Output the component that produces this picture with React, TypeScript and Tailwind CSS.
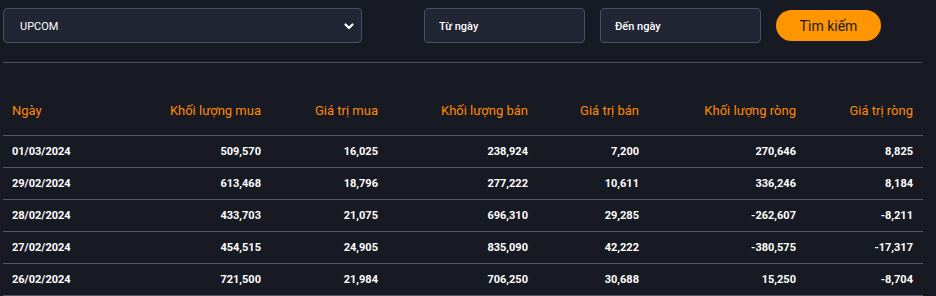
const rows = [
  ['01/03/2024', '509,570', '16,025', '238,924', '7,200', '270,646', '8,825'],
  ['29/02/2024', '613,468', '18,796', '277,222', '10,611', '336,246', '8,184'],
  ['28/02/2024', '433,703', '21,075', '696,310', '29,285', '-262,607', '-8,211'],
  ['27/02/2024', '454,515', '24,905', '835,090', '42,222', '-380,575', '-17,317'],
  ['26/02/2024', '721,500', '21,984', '706,250', '30,688', '15,250', '-8,704'],
]

const headers = ['Ngày', 'Khối lượng mua', 'Giá trị mua', 'Khối lượng bán', 'Giá trị bán', 'Khối lượng ròng', 'Giá trị ròng']

const grid = 'grid grid-cols-[145px_123px_117px_150px_111px_157px_117px]'

export default function App() {
  return (
    <div className="h-[296px] w-[936px] overflow-hidden bg-[#181a23] font-['Roboto',sans-serif]">
      {/* Filter bar */}
      <div className="flex items-center pl-[3px] pt-[8px]">
        <div className="flex h-[35px] w-[359px] items-center justify-between rounded-[4px] border border-[#4b4d62] bg-[#222634] pl-[16px] pr-[6px] pt-[3px] text-[11px] text-white">
          <span>UPCOM</span>
          <svg width="12" height="12" viewBox="0 0 12 12" fill="none" className="-mt-[3px]">
            <path d="M2.5 4.5 6 8l3.5-3.5" stroke="#fff" strokeWidth="2.2" strokeLinecap="round" strokeLinejoin="round" />
          </svg>
        </div>

        <div className="ml-[62px] flex items-center gap-[15px]">
          <div className="flex h-[35px] w-[161px] items-center rounded-[4px] border border-[#4b4d62] bg-[#222634] pl-[14px] pt-[3px] text-[11px] font-medium text-white">
            Từ ngày
          </div>
          <div className="flex h-[35px] w-[161px] items-center rounded-[4px] border border-[#4b4d62] bg-[#222634] pl-[14px] pt-[3px] text-[11px] font-medium text-white">
            Đến ngày
          </div>
          <button className="flex h-[31px] w-[105px] items-center justify-center rounded-full bg-[#ff9500] pt-[2px] text-[14px] text-[#1c1c1c]">
            Tìm kiếm
          </button>
        </div>
      </div>

      {/* Divider */}
      <div className="ml-[3px] mt-[19px] h-px w-[919px] bg-[#4f5064]" />

      {/* Table */}
      <div className="ml-[3px] mt-[20px] w-[920px]">
        <div className={`${grid} h-[53px] items-center border-b border-[#55566a] pt-[4px] text-[13px] text-[#ff8a00]`}>
          {headers.map((h, i) => (
            <div key={h} className={i === 0 ? 'pl-[9px]' : 'pr-[10px] text-right'}>
              {h}
            </div>
          ))}
        </div>

        {rows.map(r => (
          <div key={r[0]} className={`${grid} h-[32px] items-center border-b border-[#55566a] pt-[1px] text-[11px] font-bold text-white`}>
            {r.map((c, i) => (
              <div key={i} className={i === 0 ? 'pl-[9px]' : 'pr-[10px] text-right'}>
                {c}
              </div>
            ))}
          </div>
        ))}
      </div>
    </div>
  )
}
